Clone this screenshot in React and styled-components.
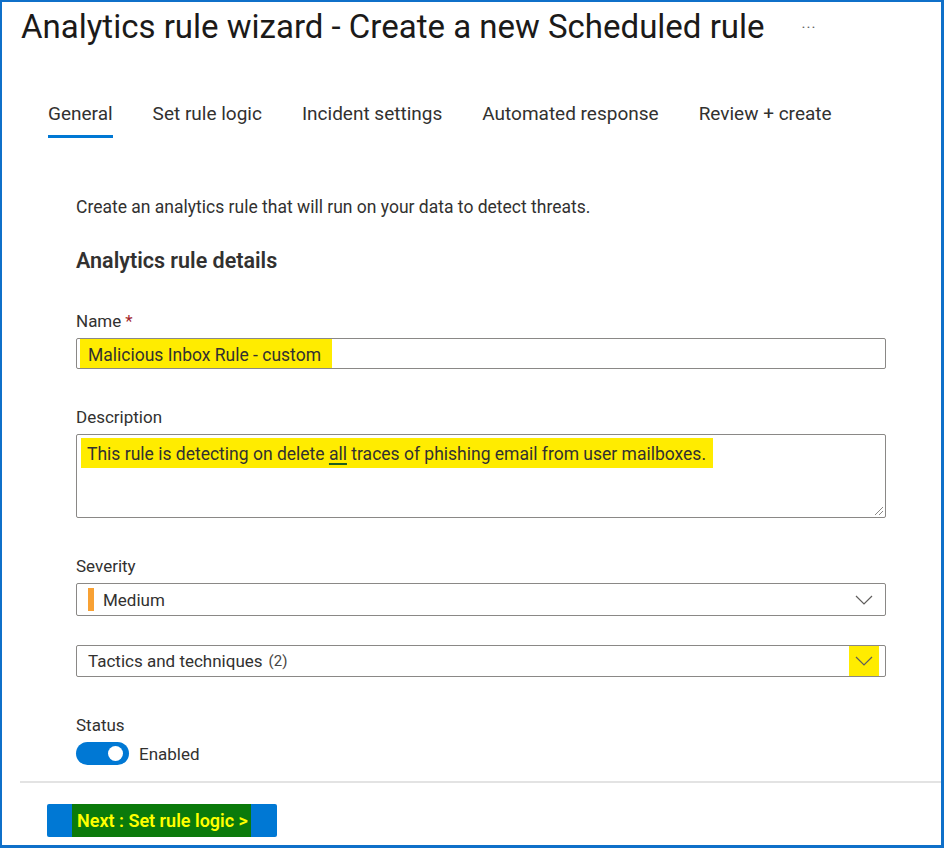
import React from "react";
import styled, { createGlobalStyle } from "styled-components";

const GlobalStyle = createGlobalStyle`
  html, body { margin: 0; padding: 0; background: #fff; }
  body {
    font-family: Roboto, "Noto Sans", "Liberation Sans", Arial, sans-serif;
    color: #323130;
  }
  * { box-sizing: border-box; }
`;

const Frame = styled.div`
  width: 944px;
  height: 848px;
  border-style: solid;
  border-color: #0f70c9;
  border-width: 2px 3px 3px 2px;
  background: #fff;
  display: flex;
  flex-direction: column;
  overflow: hidden;
`;

const Header = styled.header`
  display: flex;
  align-items: center;
  padding: 5px 0 0 19px;
`;

const Title = styled.h1`
  margin: 0;
  font-size: 33px;
  font-weight: 400;
  line-height: 40px;
  color: #1b1a19;
  white-space: nowrap;
`;

const More = styled.span`
  margin-left: 37px;
  margin-top: 2px;
  font-size: 15px;
  letter-spacing: 1px;
  color: #605e5c;
  line-height: 1;
`;

const Tabs = styled.nav`
  display: flex;
  gap: 40px;
  padding-left: 46px;
  margin-top: 55px;
`;

const Tab = styled.div`
  font-size: 19px;
  line-height: 24px;
  padding-bottom: 9px;
  color: #323130;
  border-bottom: 3px solid ${(p) => (p.$active ? "#0078d4" : "transparent")};
  white-space: nowrap;
`;

const Form = styled.main`
  display: flex;
  flex-direction: column;
  margin-top: 58px;
  padding: 0 55px 0 74px;
`;

const Intro = styled.p`
  margin: 0;
  font-size: 17.5px;
  line-height: 22px;
`;

const SectionTitle = styled.h2`
  margin: 29px 0 0;
  font-size: 21.5px;
  font-weight: 600;
  line-height: 28px;
  color: #323130;
`;

const Fields = styled.div`
  display: flex;
  flex-direction: column;
  gap: 37px;
  margin-top: 35px;
`;

const Field = styled.div`
  display: flex;
  flex-direction: column;
  gap: 6px;
  margin-top: ${(p) => p.$pull || 0}px;
`;

const Label = styled.label`
  font-size: 17px;
  line-height: 22px;
  color: #323130;
`;

const Required = styled.span`
  color: #a4262c;
  margin-left: 4px;
`;

const TextBox = styled.div`
  position: relative;
  height: ${(p) => p.$h}px;
  border: 1px solid #8a8886;
  border-radius: 2px;
  padding: ${(p) => p.$pad};
  display: flex;
  align-items: flex-start;
  background: #fff;
`;

const Highlight = styled.span`
  display: inline-flex;
  align-items: center;
  height: ${(p) => p.$h}px;
  padding: 2px ${(p) => p.$pr}px 0 ${(p) => p.$pl}px;
  background: #ffec00;
  font-size: 17.5px;
  color: #323130;
  white-space: pre;
`;

const Underlined = styled.span`
  text-decoration: underline;
  text-decoration-color: #1f5e1f;
  text-decoration-thickness: 2px;
  text-underline-offset: 3px;
`;

const Grip = styled.svg`
  position: absolute;
  right: 1px;
  bottom: 1px;
`;

const Select = styled.div`
  height: ${(p) => p.$h}px;
  border: 1px solid #8a8886;
  border-radius: 2px;
  display: flex;
  align-items: center;
  padding: 0 6px 0 11px;
  font-size: 17px;
  color: #323130;
`;

const SeverityBar = styled.span`
  width: 6px;
  height: 23px;
  background: #f8a134;
  margin-right: 9px;
`;

const Count = styled.span`
  margin-left: 6px;
  font-size: 15px;
  color: #484644;
`;

const ChevronBox = styled.span`
  margin-left: auto;
  width: 30px;
  height: 30px;
  display: flex;
  align-items: center;
  justify-content: center;
  background: ${(p) => (p.$hl ? "#ffec00" : "transparent")};
`;

const ToggleRow = styled.div`
  display: flex;
  align-items: center;
  gap: 10px;
  font-size: 17px;
`;

const Toggle = styled.span`
  width: 53px;
  height: 23px;
  border-radius: 12px;
  background: #0078d4;
  display: flex;
  align-items: center;
  justify-content: flex-end;
  padding-right: 6px;
`;

const Knob = styled.span`
  width: 15px;
  height: 15px;
  border-radius: 50%;
  background: #fff;
`;

const Footer = styled.footer`
  margin-top: auto;
  margin-left: 18px;
  border-top: 2px solid #e3e3e3;
  padding: 21px 0 8px 27px;
`;

const PrimaryButton = styled.button`
  height: 33px;
  padding: 0 26px 0 25px;
  border: none;
  border-radius: 2px;
  background: #0078d4;
  display: inline-flex;
  align-items: stretch;
  font-family: inherit;
  cursor: pointer;
`;

const ButtonHighlight = styled.span`
  display: flex;
  align-items: center;
  padding: 0 3px 0 5px;
  background: #0b7a0b;
  color: #ffff00;
  font-size: 18px;
  font-weight: 600;
  white-space: nowrap;
`;

const Chevron = () => (
  <svg width="18" height="10" viewBox="0 0 18 10" fill="none">
    <path d="M1 1 L9 9 L17 1" stroke="#605e5c" strokeWidth="1.2" />
  </svg>
);

export default function App() {
  return (
    <>
      <GlobalStyle />
      <Frame>
        <Header>
          <Title>Analytics rule wizard - Create a new Scheduled rule</Title>
          <More>···</More>
        </Header>

        <Tabs>
          <Tab $active>General</Tab>
          <Tab>Set rule logic</Tab>
          <Tab>Incident settings</Tab>
          <Tab>Automated response</Tab>
          <Tab>Review + create</Tab>
        </Tabs>

        <Form>
          <Intro>Create an analytics rule that will run on your data to detect threats.</Intro>
          <SectionTitle>Analytics rule details</SectionTitle>

          <Fields>
            <Field>
              <Label>
                Name<Required>*</Required>
              </Label>
              <TextBox $h={31} $pad="0 3px">
                <Highlight $h={29} $pl={8} $pr={11}>
                  Malicious Inbox Rule - custom
                </Highlight>
              </TextBox>
            </Field>

            <Field>
              <Label>Description</Label>
              <TextBox $h={84} $pad="3px 4px">
                <Highlight $h={30} $pl={6} $pr={7}>
                  This rule is detecting on delete <Underlined>all</Underlined> traces of phishing
                  email from user mailboxes.
                </Highlight>
                <Grip width="11" height="11" viewBox="0 0 11 11">
                  <path d="M10 2 L2 10 M10 6 L6 10" stroke="#8a8886" strokeWidth="1" />
                </Grip>
              </TextBox>
            </Field>

            <Field>
              <Label>Severity</Label>
              <Select $h={33}>
                <SeverityBar />
                Medium
                <ChevronBox>
                  <Chevron />
                </ChevronBox>
              </Select>
            </Field>

            <Field $pull={-8}>
              <Select $h={32}>
                Tactics and techniques<Count>(2)</Count>
                <ChevronBox $hl>
                  <Chevron />
                </ChevronBox>
              </Select>
            </Field>

            <Field>
              <Label>Status</Label>
              <ToggleRow>
                <Toggle>
                  <Knob />
                </Toggle>
                Enabled
              </ToggleRow>
            </Field>
          </Fields>
        </Form>

        <Footer>
          <PrimaryButton>
            <ButtonHighlight>Next : Set rule logic &gt;</ButtonHighlight>
          </PrimaryButton>
        </Footer>
      </Frame>
    </>
  );
}
